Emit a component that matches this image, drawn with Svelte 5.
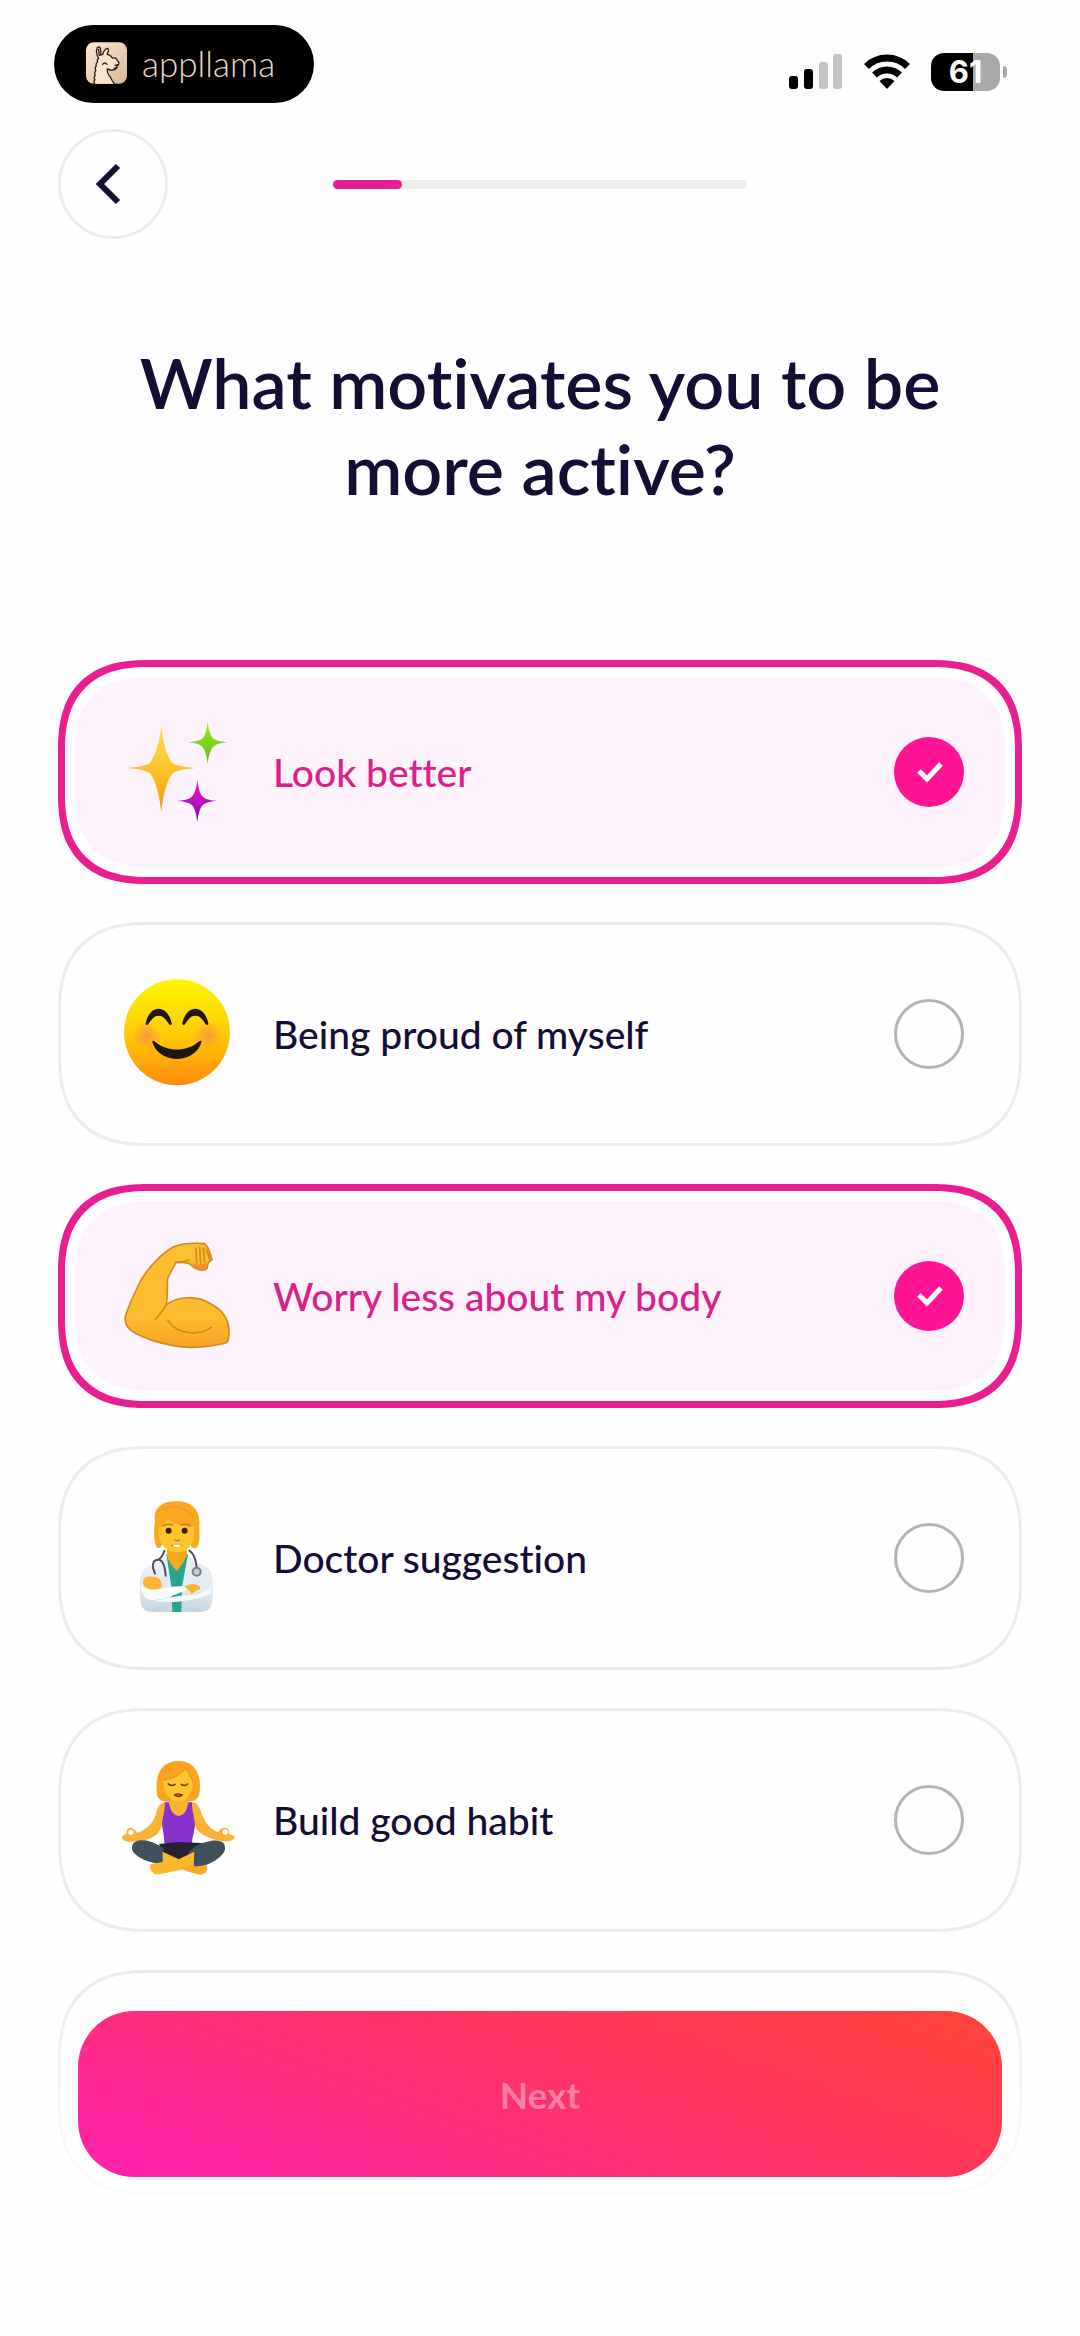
<script lang="ts">
	let options = [
		{ id: 'look', text: 'Look better', checked: true },
		{ id: 'proud', text: 'Being proud of myself', checked: false },
		{ id: 'body', text: 'Worry less about my body', checked: true },
		{ id: 'doctor', text: 'Doctor suggestion', checked: false },
		{ id: 'habit', text: 'Build good habit', checked: false }
	];

	let step = 1;
	let steps = 6;
</script>

<div class="screen">
	<div class="status">
		<div class="brand">
			<svg class="llama" viewBox="137 96 124 126" aria-hidden="true">
				<defs>
					<linearGradient id="tile" x1="0" y1="0" x2="1" y2="1">
						<stop offset="0" stop-color="#ffe9d6" />
						<stop offset="1" stop-color="#d9b697" />
					</linearGradient>
				</defs>
				<rect x="137" y="96" width="124" height="126" rx="24" fill="url(#tile)" />
				<path
					d="M163 222q-4-7 1-13-5-7 1-13-4-8 2-14-5-8 1-14-2-8 4-12-3-7 3-11-8-14-6-25c1-11 10-13 12-3q2 10 0 18l7-2c1-9 8-18 14-18 5 2 2 12-1 18 8 1 13 6 16 11 9-2 14 2 15 8 7 4 5 13-1 16 1 7-5 12-15 13-6 1-9-2-13-4 4 18 8 32 22 45z"
					fill="#fbe3cc"
				/>
				<path
					d="M163 222q-4-7 1-13-5-7 1-13-4-8 2-14-5-8 1-14-2-8 4-12-3-7 3-11-8-14-6-25c1-11 10-13 12-3q2 10 0 18l7-2c1-9 8-18 14-18 5 2 2 12-1 18 8 1 13 6 16 11 9-2 14 2 15 8 7 4 5 13-1 16 1 7-5 12-15 13-6 1-9-2-13-4M201 178q1 16 10 24l5 10 7 10M187 163q7-8 14 0M225 166l8-2-3 8-8 3M175 118l2 18"
					fill="none"
					stroke="#2b211c"
					stroke-width="4"
					stroke-linecap="round"
					stroke-linejoin="round"
				/>
			</svg>
			<span>appllama</span>
		</div>
		<div class="indicators">
			<svg width="50" height="38" viewBox="0 0 50 38" aria-hidden="true">
				<rect x="1" y="23" width="9" height="13" rx="3" />
				<rect x="16" y="16" width="9" height="20" rx="3" />
				<rect x="31" y="9" width="9" height="27" rx="3" fill="#c4c4c4" />
				<rect x="45" y="1" width="9" height="35" rx="3" fill="#c4c4c4" />
			</svg>
			<svg width="48" height="38" viewBox="0 0 48 38" aria-hidden="true">
				<g fill="none" stroke="#000" stroke-width="7">
					<path d="M3.500 13.500a29 29 0 0 1 41 0" />
					<path d="M11.500 22a18 18 0 0 1 25 0" />
				</g>
				<path d="M24 36l-7.500-8a11 11 0 0 1 15 0z" />
			</svg>
			<div class="battery"><span>61</span></div>
		</div>
	</div>

	<header>
		<button class="back" aria-label="Back">
			<svg width="40" height="48" viewBox="0 0 40 48" aria-hidden="true">
				<path d="M28 6 10 24l18 18" fill="none" stroke="#150d33" stroke-width="6" />
			</svg>
		</button>
		<div class="progress">
			<div class="bar" style="width: {(step / steps) * 100}%"></div>
		</div>
	</header>

	<h1>What motivates you to be more active?</h1>

	<div class="options">
		{#each options as option (option.id)}
			<label class="option" class:selected={option.checked}>
				<span class="inner">
					{#if option.id == 'look'}
						<svg class="emoji" viewBox="231 216 360 360" aria-hidden="true">
							<defs>
								<linearGradient id="gold" x1="0" y1="0" x2="0" y2="1">
									<stop offset="0" stop-color="#ffe04a" />
									<stop offset="0.500" stop-color="#fcc42c" />
									<stop offset="1" stop-color="#f39a12" />
								</linearGradient>
								<linearGradient id="lime" x1="0" y1="0" x2="0" y2="1">
									<stop offset="0" stop-color="#a4e92a" />
									<stop offset="1" stop-color="#62bd12" />
								</linearGradient>
								<linearGradient id="violet" x1="0" y1="0" x2="0" y2="1">
									<stop offset="0.300" stop-color="#da12cf" />
									<stop offset="1" stop-color="#6d128d" />
								</linearGradient>
							</defs>
							<path
								d="M364 255c5 58 22 108 38 117 14 6 38 10 65 12-28 2-49 6-64 13-17 9-33 60-39 120-6-60-22-110-39-120-14-7-38-11-67-13 29-2 52-6 66-12 17-9 35-59 40-117z"
								fill="url(#gold)"
							/>
							<path
								d="M503 245c4 28 9 46 20 53 8 5 22 7 40 9-19 2-32 5-40 10-11 8-17 28-20 55-3-27-9-47-19-55-8-5-21-8-39-10 18-2 31-4 39-9 10-7 16-25 19-53z"
								fill="url(#lime)"
							/>
							<path
								d="M472 419c3 28 9 46 20 54 8 5 21 8 39 9-18 2-31 5-39 10-11 7-17 28-20 55-3-27-9-48-20-55-8-5-22-8-40-10 18-1 32-4 40-9 11-8 17-26 20-54z"
								fill="url(#violet)"
							/>
						</svg>
					{:else if option.id == 'proud'}
						<svg class="emoji" viewBox="51 42 360 360" aria-hidden="true">
							<defs>
								<linearGradient id="face" x1="0" y1="0" x2="0" y2="1">
									<stop offset="0" stop-color="#fdf500" />
									<stop offset="0.500" stop-color="#ffcd08" />
									<stop offset="1" stop-color="#fe8a0b" />
								</linearGradient>
								<radialGradient id="cheek">
									<stop offset="0" stop-color="#fb8b4a" stop-opacity="0.800" />
									<stop offset="1" stop-color="#fb8b4a" stop-opacity="0" />
								</radialGradient>
							</defs>
							<circle cx="231" cy="217" r="159" fill="url(#face)" />
							<circle cx="140" cy="228" r="42" fill="url(#cheek)" />
							<circle cx="325" cy="226" r="42" fill="url(#cheek)" />
							<g fill="#1f170c">
								<path d="M137 190c5-26 20-44 39-44s34 18 39 44c1 6-6 6-9 1-9-15-18-24-30-24s-21 9-30 24c-3 5-10 5-9-1z" />
								<path d="M247 190c5-26 20-44 39-44s34 18 39 44c1 6-6 6-9 1-9-15-18-24-30-24s-21 9-30 24c-3 5-10 5-9-1z" />
								<path d="M157 246c0-5 4-5 8-1 37 31 94 31 131 0 5-4 9-4 8 2-5 24-33 50-73 50s-69-27-74-51z" />
							</g>
						</svg>
					{:else if option.id == 'body'}
						<svg class="emoji" viewBox="51 48 360 360" aria-hidden="true">
							<defs>
								<linearGradient id="arm" x1="0" y1="0" x2="0" y2="1">
									<stop offset="0" stop-color="#fbc02f" />
									<stop offset="0.700" stop-color="#fdbd31" />
									<stop offset="1" stop-color="#f8a227" />
								</linearGradient>
							</defs>
							<g stroke="#cf8b22" stroke-width="5" stroke-linejoin="round" stroke-linecap="round">
								<path
									d="M76 291c8-32 25-66 44-105 25-45 65-86 101-106 22-8 58-12 93-9l11 14 11 34-11 8-4 18c-8 9-24 6-36-1l-17-13c-15-5-28-3-40-4-8 16-19 33-25 49-2 20 1 48-4 78 35-27 94-28 134-2 36 19 55 49 54 86-1 28-4 31-23 34-48 10-101 14-144 5-50-9-96-27-120-41-17-10-27-24-24-45z"
									fill="url(#arm)"
								/>
								<path
									d="M199 254c-9 18-20 31-33 44M204 302c28 42 93 46 130 20M228 127q22 2 38-7M288 85l2 44M299 82l3 48M310 84l4 44M319 88l12 34"
									fill="none"
								/>
							</g>
							<path d="M275 130q25 6 45 0l-3 18c-9 6-22 4-42-18z" fill="#f58b2c" />
						</svg>
					{:else if option.id == 'doctor'}
						<svg class="emoji" viewBox="21 54 360 360" aria-hidden="true">
							<defs>
								<linearGradient id="coat" x1="0" y1="0" x2="0" y2="1">
									<stop offset="0" stop-color="#eaf1f6" />
									<stop offset="0.600" stop-color="#e2eaf1" />
									<stop offset="1" stop-color="#c6d5e0" />
								</linearGradient>
							</defs>
							<path
								d="M91 360c-1-40-3-62 4-81 8-17 28-22 58-35l16-22h66l15 22c33 13 49 18 55 40 5 20 3 50 2 76-2 24-12 36-36 36H128c-24 0-36-12-37-36z"
								fill="url(#coat)"
							/>
							<path d="M169 222l31 16 34-16-18 98-2 76h-27l-3-76z" fill="#2ba392" />
							<path d="M172 196h58v31q-10 24-29 46-22-20-30-46z" fill="#f4a91c" />
							<path
								d="M139 200c-9-20-8-51-4-78-8-38 25-60 64-58 43-1 72 24 69 68-1 26 4 52-7 70-11 7-18 0-20-9h-85c-2 11-9 15-17 7z"
								fill="#fba820"
							/>
							<path
								d="M146 146c10-6 22-14 26-28 24 17 50 22 80 22v25c-1 28-22 52-51 52s-54-24-55-52z"
								fill="#ffc52e"
							/>
							<path d="M152 92q52-34 104 23" fill="none" stroke="#f19319" stroke-width="3" />
							<g fill="#33251f">
								<circle cx="176" cy="152" r="9" />
								<circle cx="224" cy="152" r="9" />
							</g>
							<path
								d="M160 137q14-8 28-2M212 135q15-6 28 2M194 180q7 4 15 0M186 196h29"
								fill="none"
								stroke="#bd6c1b"
								stroke-width="4"
								stroke-linecap="round"
							/>
							<path d="M186 194h29q-13 14-29 0z" fill="#fff" />
							<g fill="none" stroke="#4c4d61" stroke-width="6" stroke-linecap="round">
								<path d="M163 212q-6 20-18 27M238 212q18 11 22 50M144 239c-12 0-17 11-15 24l6 18M145 239c14 0 20 19 22 48" />
							</g>
							<circle cx="260" cy="275" r="12" fill="#c6ced6" stroke="#74808d" stroke-width="6" />
							<path
								d="M93 315c0 26 12 42 29 45 18 3 69-13 102-28l11-15-52 3-34 7c-22 6-45-1-56-12z"
								fill="#fbfdfe"
							/>
							<path d="M304 318c-12 12-38 28-60 27l-36 2-74 15c48 10 114 2 168-19z" fill="#f5f8fb" />
							<path d="M101 298c5-11 24-9 38-6 13 3 19 20 15 32-15 7-42 7-52-7-4-6-4-13-1-19z" fill="#fcb42c" />
							<path d="M222 320c11-8 28-10 45-3 7 6 3 12-7 14l-15 12q-9-16-23-23z" fill="#fcb42c" />
						</svg>
					{:else}
						<svg class="emoji" viewBox="51 60 360 360" aria-hidden="true">
							<path
								d="M171 162c-8-55 12-99 64-99 46 0 70 35 64 91 0 24-17 31-38 31h-58c-19 0-30-8-32-23z"
								fill="#faa31f"
							/>
							<g fill="#f9b233">
								<path d="M196 187c-18 1-24 17-29 37-7 22-24 43-56 55-10-20-23-19-31-9l-1 11-13 8c-1 11 8 16 24 16 39 0 75-9 88-32 9-15 18-36 27-63z" />
								<path d="M272 187c20 0 24 10 31 29 8 26 22 48 51 61 10-18 27-16 32-8l1 12 17 8c0 10-10 15-22 15-39-1-76-17-91-35-11-16-18-37-25-61z" />
								<path d="M205 183h59v43h-59z" />
							</g>
							<path d="M213 155h43v40q-20 34-44 0z" fill="#f8b52f" />
							<path d="M190 119c25-5 56-21 67-36 11 18 22 34 21 51-1 28-20 50-43 50-26 0-46-23-45-65z" fill="#ffc42e" />
							<path d="M191 120c29-4 54-20 67-37M256 83q14 19 23 41" fill="none" stroke="#ee9318" stroke-width="4" />
							<path
								d="M205 132q10 8 20 1M244 133q10 7 19-1M224 165q10-6 22 0-10 8-22 0"
								fill="none"
								stroke="#6c3f13"
								stroke-width="5"
								stroke-linecap="round"
							/>
							<circle cx="93" cy="277" r="8" fill="#fff" />
							<circle cx="376" cy="276" r="8" fill="#fff" />
							<path
								d="M194 187h12c4 20 12 40 30 40 19 0 25-18 29-40h11c0 24 5 40 8 57 3 23-6 40-8 65-24 22-61 21-83 1 1-30-11-50-5-74 4-16 7-28 6-49z"
								fill="#8731cc"
							/>
							<path d="M177 312l59-6 80 4-54 55-66-7z" fill="#272231" />
							<path d="M96 326c-2-26 28-30 56-21 27 9 53 28 83 50l-47 15c-38 3-91-23-92-44z" fill="#42505b" />
							<path d="M375 326c3-26-29-29-57-20-28 8-43 16-54 38l19 36c37 3 91-30 92-54z" fill="#42505b" />
							<path d="M190 313q46 20 95 0l-25 29-24 16-46-20z" fill="#272231" />
							<path d="M188 335l48 23 47-23-2 45c-33 10-69 15-104 23-18 5-32-17-25-31l36-6z" fill="#fdb72d" />
							<path d="M237 382l42-8 4 6 37-5c5 14-3 28-20 29-22-3-41-10-63-22z" fill="#f7a82a" />
						</svg>
					{/if}
					<span class="text">{option.text}</span>
					<span class="check">
						<input type="checkbox" bind:checked={option.checked} />
						{#if option.checked}
							<svg width="70" height="70" viewBox="0 0 70 70" aria-hidden="true">
								<path d="M25 34l8 8 14-15" fill="none" stroke="#fff" stroke-width="5" />
							</svg>
						{/if}
					</span>
				</span>
			</label>
		{/each}
		<div class="option"></div>
	</div>

	<footer>
		<button class="next">Next</button>
	</footer>
</div>

<style>
	:global(body) {
		background: #fefefe;
	}

	.screen {
		box-sizing: border-box;
		min-height: 100vh;
		padding: 25px 58px 142px;
		color: #150d33;
		font-family: Lato, 'Open Sans', sans-serif;
		font-variant-ligatures: none;
	}

	.status {
		display: flex;
		justify-content: space-between;
		align-items: center;
		margin-left: -4px;
		padding-right: 22px;
	}

	.brand {
		box-sizing: border-box;
		display: flex;
		align-items: center;
		gap: 15px;
		height: 78px;
		padding: 0 39px 2px 32px;
		border-radius: 39px;
		background: #000;
		color: #ecd6c5;
		font-size: 35px;
		font-weight: 300;
	}

	.llama {
		width: 41px;
		height: 42px;
	}

	.indicators {
		display: flex;
		align-items: center;
		gap: 20px;
		padding-top: 16px;
	}

	.indicators svg {
		overflow: visible;
	}

	.indicators svg + svg {
		margin-left: 5px;
	}

	.battery {
		position: relative;
		width: 69px;
		height: 38px;
		border-radius: 13px;
		background: linear-gradient(90deg, #000 61%, #a9a9a9 61%);
		color: #fff;
		font-family: Inter, sans-serif;
		font-size: 31px;
		font-weight: 700;
		line-height: 38px;
		text-align: center;
	}

	.battery::after {
		content: '';
		position: absolute;
		top: 13px;
		right: -7px;
		width: 4px;
		height: 12px;
		border-radius: 0 6px 6px 0;
		background: #a9a9a9;
	}

	header {
		display: grid;
		grid-template-columns: 1fr 43% 1fr;
		align-items: center;
		margin-top: 26px;
	}

	.back {
		display: flex;
		align-items: center;
		justify-content: center;
		width: 110px;
		height: 110px;
		padding: 0 6px 0 0;
		border: 3px solid #ececec;
		border-radius: 50%;
		background: none;
		cursor: pointer;
	}

	.progress {
		height: 9px;
		border-radius: 5px;
		background: #ededed;
	}

	.bar {
		height: 9px;
		border-radius: 5px;
		background: #e61e93;
	}

	h1 {
		margin: 100px 0 0;
		padding: 0 40px;
		font-size: 70px;
		font-weight: 600;
		line-height: 86px;
		text-align: center;
	}

	.options {
		display: grid;
		gap: 38px;
		margin-top: 149px;
	}

	.option {
		box-sizing: border-box;
		display: flex;
		height: 224px;
		padding: 14px;
		border: 3px solid #ececec;
		border-radius: 76px;
		cursor: pointer;
	}

	.selected {
		padding: 10px;
		border: 7px solid #e91e90;
		background: #fef3fc content-box;
		color: #d8218a;
	}

	/* continuous corners where the browser knows them */
	@supports (corner-shape: squircle) {
		.option {
			border-radius: 90px;
			corner-shape: superellipse(1.3);
		}
	}

	.inner {
		display: flex;
		flex: 1;
		align-items: center;
		padding: 0 41px 0 42px;
	}

	.emoji {
		flex: none;
		width: 120px;
		height: 120px;
	}

	.text {
		flex: 1;
		margin-left: 36px;
		font-size: 39px;
		font-weight: 500;
		line-height: 48px;
	}

	.check {
		display: grid;
	}

	.check > * {
		grid-area: 1 / 1;
	}

	.check svg {
		pointer-events: none;
	}

	input[type='checkbox'] {
		appearance: none;
		width: 70px;
		height: 70px;
		margin: 0;
		border: 3px solid #b4b4b4;
		border-radius: 50%;
		cursor: pointer;
	}

	input[type='checkbox']:checked {
		border: 0;
		background: #ff1496;
	}

	/* stays over the list while it scrolls */
	footer {
		position: fixed;
		right: 0;
		bottom: 0;
		left: 0;
		padding: 20px 78px 159px;
		background: linear-gradient(rgba(254, 254, 254, 0), rgba(254, 254, 254, 0.800) 50%);
	}

	.next {
		display: block;
		width: 100%;
		height: 166px;
		border: 0;
		border-radius: 56px;
		background: linear-gradient(20deg, #ff22b0, #ff3366 55%, #ff4538);
		color: rgba(255, 255, 255, 0.400);
		font-family: inherit;
		font-size: 37px;
		font-weight: 700;
		cursor: pointer;
	}
</style>
